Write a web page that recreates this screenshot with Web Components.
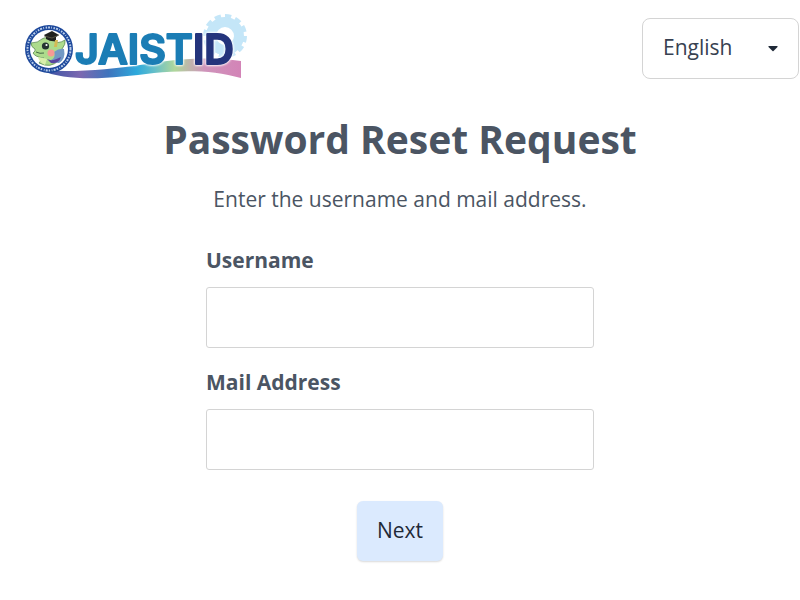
<!DOCTYPE html>
<html lang="en">
<head>
  <meta charset="utf-8">
  <meta name="viewport" content="width=device-width, initial-scale=1">
  <title>Password Reset Request</title>
  <style>
    body {
      margin: 0;
      background: #fff;
      color: #4b5563;
      font-family: "Open Sans", "Noto Sans", sans-serif;
      font-size: 21px;
      line-height: 32px;
    }
  </style>
</head>
<body>
  <reset-page>
    <id-logo slot="logo"></id-logo>
    <language-select slot="language"></language-select>
    <span slot="title">Password Reset Request</span>
    <span slot="lead">Enter the username and mail address.</span>
    <text-field name="username" label="Username"></text-field>
    <text-field name="mail" label="Mail Address" type="email"></text-field>
    <submit-button slot="action">Next</submit-button>
  </reset-page>

  <script>
    class ResetPage extends HTMLElement {
      constructor() {
        super();
        this.attachShadow({ mode: 'open' });
        this.shadowRoot.innerHTML = `
          <style>
            :host {
              display: block;
            }

            header {
              display: flex;
              justify-content: space-between;
              align-items: flex-start;
              padding: 12px 1px 0 24px;
            }

            main {
              display: flex;
              flex-direction: column;
              align-items: center;
              padding: 31px 16px;
            }

            h1 {
              margin: 0;
              font-size: 39px;
              line-height: 56px;
              text-align: center;
            }

            p {
              margin: 16px 0 0;
              text-align: center;
            }

            form {
              display: flex;
              flex-direction: column;
              gap: 18px;
              width: 100%;
              max-width: 388px;
              margin-top: 29px;
            }

            #action {
              display: flex;
              justify-content: center;
              margin-top: 13px;
            }
          </style>

          <header>
            <slot name="logo"></slot>
            <slot name="language"></slot>
          </header>
          <main>
            <h1><slot name="title"></slot></h1>
            <p><slot name="lead"></slot></p>
            <form>
              <slot></slot>
              <div id="action"><slot name="action"></slot></div>
            </form>
          </main>
        `;
      }
    }

    class IdLogo extends HTMLElement {
      constructor() {
        super();
        this.attachShadow({ mode: 'open' });
        this.shadowRoot.innerHTML = `
          <style>
            :host {
              display: block;
            }

            svg {
              display: block;
            }

            text {
              font-family: Inter, "Open Sans", sans-serif;
              font-size: 41px;
              font-weight: 600;
              fill: #1b7db5;
              stroke: #1b7db5;
              stroke-width: 2;
              stroke-linejoin: round;
              filter: drop-shadow(0 0 1px #fff) drop-shadow(0 0 1px #fff);
            }

            .id {
              fill: #24347c;
              stroke: #24347c;
            }
          </style>

          <svg width="224" height="68" viewBox="0 0 224 68" role="img" aria-label="JAISTID">
            <defs>
              <linearGradient id="band" x1="0" x2="1">
                <stop offset="0" stop-color="#2b4fa2"/>
                <stop offset="0.2" stop-color="#7c68b0"/>
                <stop offset="0.34" stop-color="#3f74bd"/>
                <stop offset="0.48" stop-color="#2da9dc"/>
                <stop offset="0.57" stop-color="#65bfc9"/>
                <stop offset="0.67" stop-color="#b0d79b"/>
                <stop offset="0.82" stop-color="#cf94bb"/>
                <stop offset="1" stop-color="#d384b7"/>
              </linearGradient>
            </defs>

            <!-- gear -->
            <g fill="none" stroke="#c4e6f8">
              <circle cx="201" cy="24" r="14" stroke-width="10"/>
              <circle cx="201" cy="24" r="20" stroke-width="4" pathLength="120" stroke-dasharray="6 4"/>
            </g>

            <!-- ribbon -->
            <path fill="url(#band)" d="M16 58 C50 61 88 57 116 53 C150 47 186 44 217 49 V66 C190 58 160 58 130 61 C90 66 46 71 16 58Z"/>

            <!-- round mascot badge -->
            <circle cx="25" cy="37" r="24" fill="#1d489b"/>
            <circle cx="25" cy="37" r="21.5" fill="none" stroke="#b9cdea" stroke-width="2" stroke-dasharray="1.5 1 2 1.2 .8 1.6"/>
            <circle cx="25" cy="37" r="19" fill="#fff"/>
            <path fill="#addb8c" stroke="#5d8b55" stroke-width=".8" d="M7 31 Q14 31 18 27 Q22 24 29 28 Q33 33 41 28 Q42 32 38 37 Q40 44 35 48 Q27 57 15 51 Q17 48 20 46 Q11 45 9 41 Q12 39 11 37 Q7 35 7 31Z"/>
            <path fill="#7299c4" d="M30 40 Q35 36 40 37 Q42 47 35 51 Q30 51 27 48 Q32 46 30 40Z"/>
            <path fill="#5a45a0" d="M23 47 Q28 50 37 45 Q35 52 27 51Z"/>
            <path fill="#d9efaa" d="M14 45 Q20 46 23 47 L21 53 Q15 50 14 45Z"/>
            <circle cx="21.500" cy="34" r="3.600" fill="#253331"/>
            <circle cx="22.500" cy="33" r="1.100" fill="#fff"/>
            <circle cx="27" cy="41" r="3.500" fill="#f69a94"/>
            <path fill="none" stroke="#456a45" d="M12 40 Q16 42 20 41"/>
            <path fill="#20211f" d="M20 23 L28 19 L35 23 L32 25 V29 Q27 30 22 27 V25Z"/>
            <path fill="none" stroke="#6b6651" stroke-width=".7" d="M20 24 L28 26 L35 23"/>
            <path fill="#d4b956" d="M31 28 L34 28 L33 35 L30 35Z"/>

            <text x="51" y="52">JAIST<tspan class="id">ID</tspan></text>
          </svg>
        `;
      }
    }

    class LanguageSelect extends HTMLElement {
      constructor() {
        super();
        this.attachShadow({ mode: 'open' });
        this.shadowRoot.innerHTML = `
          <style>
            :host {
              display: grid;
              align-items: center;
              margin-top: 6px;
            }

            select, svg {
              grid-area: 1 / 1;
            }

            select {
              box-sizing: border-box;
              width: 157px;
              height: 61px;
              padding: 0 48px 3px 20px;
              border: 1px solid #d4d4d4;
              border-radius: 8px;
              background: #fff;
              color: #374151;
              font: inherit;
              appearance: none;
            }

            svg {
              justify-self: end;
              margin-right: 21px;
              pointer-events: none;
            }
          </style>

          <select aria-label="Language">
            <option>English</option>
            <option lang="ja">日本語</option>
          </select>
          <svg width="10" height="6" viewBox="0 0 10 6" aria-hidden="true">
            <path fill="#1f2937" d="M1 0H9Q10 0 9.500 1L5.500 5Q5 5.500 4.500 5L.5 1Q0 0 1 0Z"/>
          </svg>
        `;
      }
    }

    class TextField extends HTMLElement {
      constructor() {
        super();
        this.attachShadow({ mode: 'open' });
        this.shadowRoot.innerHTML = `
          <style>
            :host {
              display: flex;
              flex-direction: column;
              gap: 11px;
            }

            label {
              font-weight: 700;
            }

            input {
              box-sizing: border-box;
              width: 100%;
              height: 61px;
              padding: 0 16px;
              border: 1px solid #d4d4d4;
              border-radius: 3px;
              background: #fff;
              color: inherit;
              font: inherit;
            }
          </style>

          <label for="field"></label>
          <input id="field">
        `;
      }

      connectedCallback() {
        const input = this.shadowRoot.querySelector('input');
        this.shadowRoot.querySelector('label').textContent = this.getAttribute('label');
        input.name = this.getAttribute('name');
        input.type = this.getAttribute('type') || 'text';
      }
    }

    class SubmitButton extends HTMLElement {
      constructor() {
        super();
        this.attachShadow({ mode: 'open' });
        this.shadowRoot.innerHTML = `
          <style>
            :host {
              display: block;
            }

            button {
              height: 60px;
              padding: 0 20px 2px;
              border: 0;
              border-radius: 6px;
              background: #dbeafe;
              box-shadow: 0 1px 2px rgba(0,0,0,0.15);
              color: #1f2937;
              font: inherit;
              cursor: pointer;
            }
          </style>

          <button type="submit"><slot></slot></button>
        `;
      }
    }

    window.customElements.define('reset-page', ResetPage);
    window.customElements.define('id-logo', IdLogo);
    window.customElements.define('language-select', LanguageSelect);
    window.customElements.define('text-field', TextField);
    window.customElements.define('submit-button', SubmitButton);
  </script>
</body>
</html>
